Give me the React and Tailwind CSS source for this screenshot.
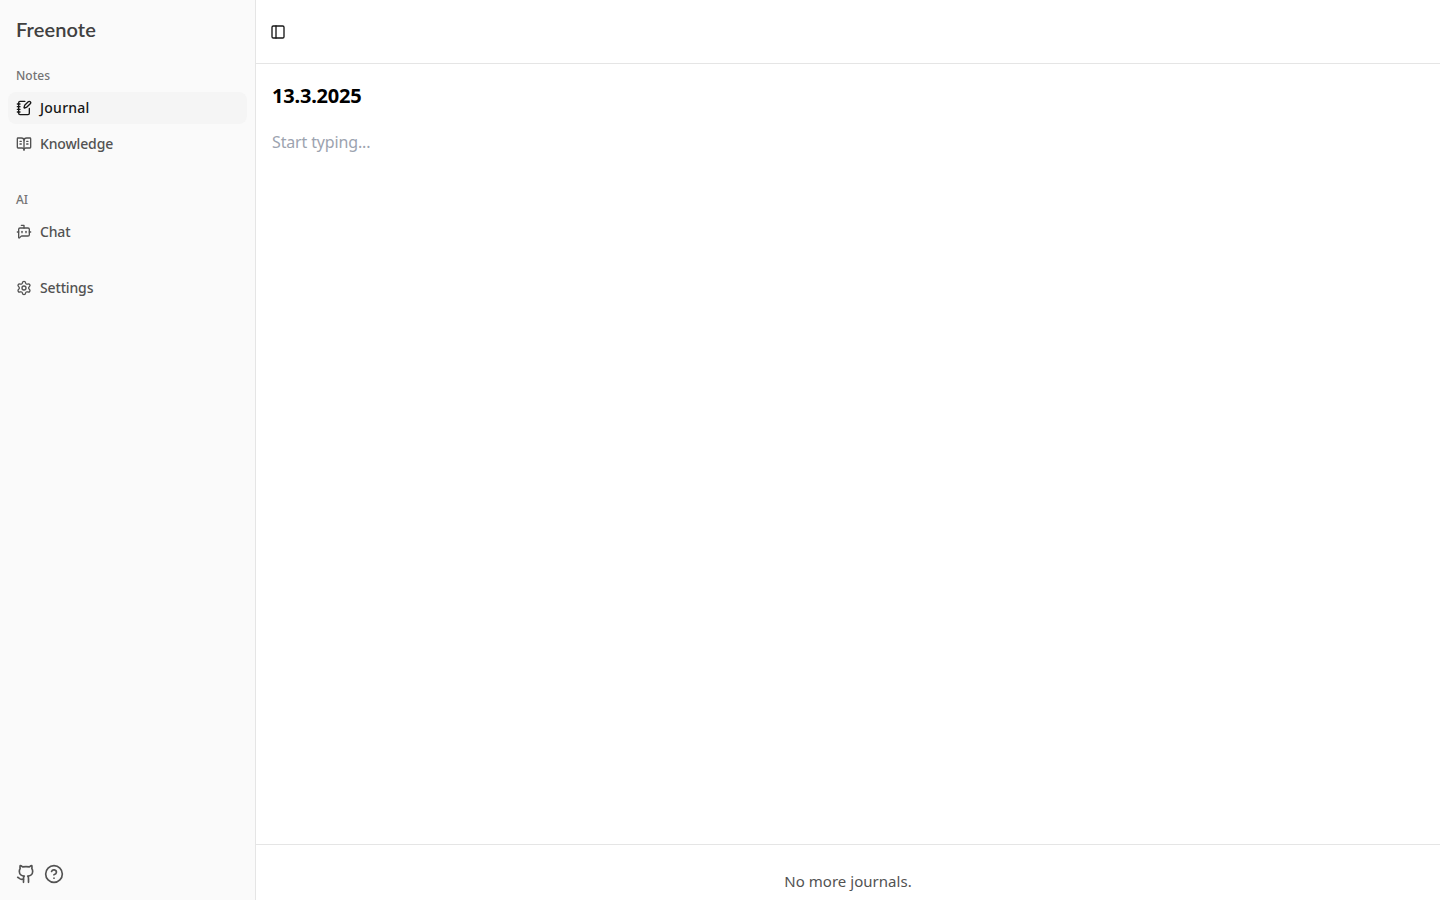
import { NotebookPen, BookOpenText, BotMessageSquare, Settings, Github, CircleHelp, PanelLeft } from "lucide-react"

const ubuntu = "font-['Noto_Sans','Open_Sans',sans-serif]"

function NavItem({ icon: Icon, label, active }) {
  return (
    <a
      className={`flex h-8 items-center gap-2 rounded-lg px-2 text-sm font-medium ${
        active ? "bg-[#f5f5f5] text-[#171717]" : "text-[#525252]"
      }`}
    >
      <Icon size={16} strokeWidth={2} />
      <span className={active ? "tracking-[0.25px]" : "tracking-[-0.15px]"}>{label}</span>
    </a>
  )
}

export default function App() {
  return (
    <div className={`flex h-[900px] w-full overflow-hidden bg-white ${ubuntu}`}>
      <aside className="flex w-[256px] shrink-0 flex-col border-r border-[#e5e5e5] bg-[#fafafa]">
        <div className="flex h-[60px] items-center px-4 pb-[2px]">
          <span className="font-['Lato',sans-serif] text-xl font-semibold tracking-[0.1px] text-[#404040]">Freenote</span>
        </div>
        <div className="flex flex-col p-2 pt-0">
          <div className="flex h-8 items-center px-2 text-xs font-medium text-[#737373]">Notes</div>
          <nav className="flex flex-col gap-1">
            <NavItem icon={NotebookPen} label="Journal" active />
            <NavItem icon={BookOpenText} label="Knowledge" />
          </nav>
        </div>
        <div className="flex flex-col p-2 pt-[16px]">
          <div className="flex h-8 items-center px-2 text-xs font-medium text-[#737373]">AI</div>
          <NavItem icon={BotMessageSquare} label="Chat" />
        </div>
        <div className="flex flex-col px-2 pt-[16px]">
          <NavItem icon={Settings} label="Settings" />
        </div>
        <div className="mt-auto flex h-[52px] items-center gap-2 px-4 text-[#525252]">
          <Github size={20} strokeWidth={2} />
          <CircleHelp size={20} strokeWidth={2} />
        </div>
      </aside>
      <main className="flex min-w-0 flex-1 flex-col">
        <header className="flex h-[64px] shrink-0 items-center border-b border-[#e5e5e5] px-[14px]">
          <PanelLeft size={16} strokeWidth={2} className="text-[#171717]" />
        </header>
        <div className="flex-1 p-4">
          <h1 className="text-xl leading-8 font-bold tracking-[-0.2px] text-black">13.3.2025</h1>
          <p className="mt-4 text-base leading-7 tracking-[-0.15px] text-[#9ca3af]">Start typing...</p>
        </div>
        <div className="flex h-[56px] shrink-0 items-center justify-center border-t border-[#e5e5e5] pt-[17px]">
          <span className="text-[15px] tracking-[0.03px] text-[#525252]">No more journals.</span>
        </div>
      </main>
    </div>
  )
}
